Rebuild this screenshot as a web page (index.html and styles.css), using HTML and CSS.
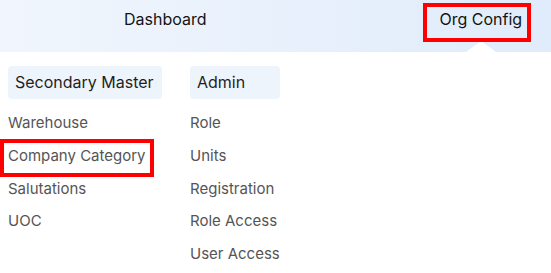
FILE: index.html
```html
<!DOCTYPE html>
<html>
<head>
<meta charset="utf-8">
<link rel="stylesheet" href="styles.css">
</head>
<body>
<header class="topbar">
  <nav class="nav">
    <span class="nav-item">Dashboard</span>
    <span class="nav-item nav-item--active">Org Config</span>
  </nav>
</header>
<section class="menu">
  <div class="col col--first">
    <div class="col-title">Secondary Master</div>
    <ul class="links">
      <li><span class="link">Warehouse</span></li>
      <li><span class="link link--marked">Company Category</span></li>
      <li><span class="link">Salutations</span></li>
      <li><span class="link">UOC</span></li>
    </ul>
  </div>
  <div class="col col--second">
    <div class="col-title">Admin</div>
    <ul class="links">
      <li><span class="link">Role</span></li>
      <li><span class="link">Units</span></li>
      <li><span class="link">Registration</span></li>
      <li><span class="link">Role Access</span></li>
      <li><span class="link">User Access</span></li>
    </ul>
  </div>
</section>
</body>
</html>
```
FILE: styles.css
```css
* { box-sizing: border-box; }
html, body { margin: 0; padding: 0; background: #fff; }
body {
  font-family: Inter, "Noto Sans", "Liberation Sans", sans-serif;
  width: 551px;
  height: 273px;
  overflow: hidden;
}
.topbar {
  height: 52px;
  background: linear-gradient(90deg, #f1f6fd 0%, #e9f1fc 45%, #e0ecfb 100%);
}
.nav {
  display: flex;
  align-items: flex-start;
  padding-left: 124px;
  padding-top: 8px;
}
.nav-item {
  font-size: 16px;
  line-height: 22px;
  color: #141414;
}
.nav-item--active {
  position: relative;
  margin-left: 233px;
}
.nav-item--active::before {
  content: "";
  position: absolute;
  left: -17px;
  right: -9px;
  top: -5px;
  bottom: -12px;
  border: 4px solid #ff0000;
  z-index: 2;
}
.nav-item--active::after {
  content: "";
  position: absolute;
  left: 50%;
  margin-left: -15px;
  top: 33px;
  width: 0;
  height: 0;
  border-left: 15px solid transparent;
  border-right: 15px solid transparent;
  border-bottom: 11px solid #fff;
  z-index: 1;
}
.menu {
  display: flex;
  gap: 28px;
  padding: 14px 8px 0;
}
.col-title {
  height: 33px;
  line-height: 33px;
  padding: 0 7px;
  background: #eef4fc;
  border-radius: 4px;
  font-size: 16px;
  color: #1f1f1f;
}
.col--first { width: 154px; }
.col--second { width: 90px; }
.links {
  list-style: none;
  margin: 13px 0 0;
  padding: 0;
  display: flex;
  flex-direction: column;
  gap: 10.75px;
}
.links li { height: 22px; }
.link {
  display: inline-block;
  font-size: 15px;
  line-height: 22px;
  color: #555555;
  position: relative;
}
.link--marked::after {
  content: "";
  position: absolute;
  left: -8px;
  right: -8px;
  top: -6px;
  bottom: -10px;
  border: 4px solid #ff0000;
}
```
